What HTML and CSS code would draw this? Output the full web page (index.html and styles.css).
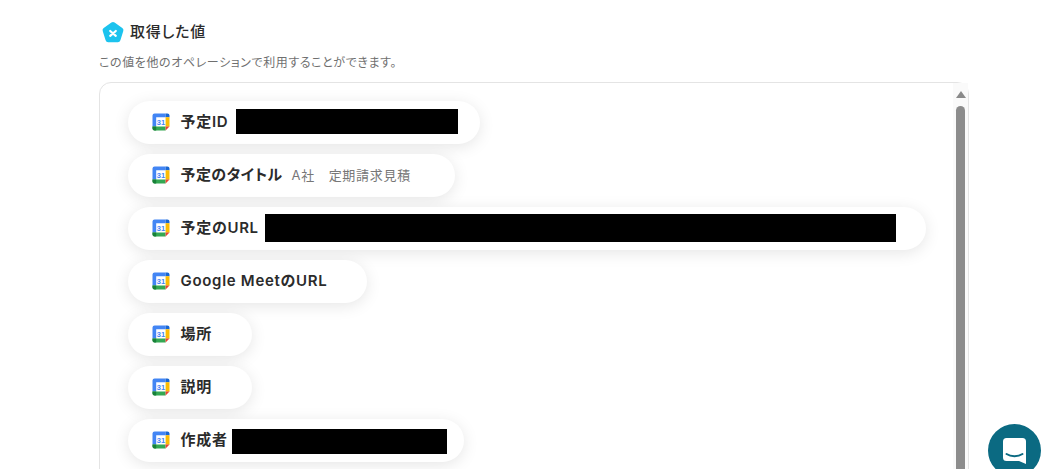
FILE: index.html
```html
<!DOCTYPE html>
<html lang="ja">
<head>
<meta charset="utf-8">
<title>取得した値</title>
<link rel="stylesheet" href="styles.css">
</head>
<body>
<svg class="defs" width="0" height="0" aria-hidden="true">
  <defs>
    <symbol id="gcal" viewBox="0 0 18 18">
      <rect x="1" y="1" width="16" height="16" rx="1.6" fill="#fff"/>
      <path d="M2.6 0.5H13.6V4.2H4.2V13.6H0.5V2.6A2.1 2.1 0 0 1 2.6 0.5Z" fill="#4285f4"/>
      <path d="M13.6 0.5H15.4A2.1 2.1 0 0 1 17.5 2.6V4.2H13.6Z" fill="#1967d2"/>
      <rect x="13.6" y="4.2" width="3.9" height="9.4" fill="#fbbc04"/>
      <path d="M4.2 13.6H13.6V17.5H2.6A2.1 2.1 0 0 1 0.5 15.4V13.6H4.2Z" fill="#34a853"/>
      <path d="M0.5 13.6H4.2V17.5H2.6A2.1 2.1 0 0 1 0.5 15.4Z" fill="#188038"/>
      <path d="M13.6 13.6H17.5L13.6 17.5Z" fill="#ea4335"/>
      <text x="8.9" y="11.9" class="gcal-num">31</text>
    </symbol>
  </defs>
</svg>
<main class="page">
  <header class="head">
    <svg class="logo" width="24" height="24" viewBox="0 0 24 24" aria-hidden="true">
      <path d="M10.4 1.6a2.7 2.7 0 0 1 3.2 0l7.7 5.5a2.7 2.7 0 0 1 1 3l-2.9 9.2a2.7 2.7 0 0 1-2.6 1.9H7.2a2.7 2.7 0 0 1-2.6-1.9L1.7 10.1a2.7 2.7 0 0 1 1-3Z" fill="#1cc3ee"/>
      <path d="M9.2 10 14.8 14.8M14.8 10 9.2 14.8" stroke="#fff" stroke-width="2.2" stroke-linecap="round"/>
    </svg>
    <h1 class="title">取得した値</h1>
  </header>
  <p class="note">この値を他のオペレーションで利用することができます。</p>
  <section class="panel">
    <ul class="list">
      <li class="pill"><svg class="cal"><use href="#gcal"/></svg><span class="label">予定ID</span><span class="mask mask-id"></span></li>
      <li class="pill"><svg class="cal"><use href="#gcal"/></svg><span class="label label-kana">予定のタイトル</span><span class="value">A社　定期請求見積</span></li>
      <li class="pill"><svg class="cal"><use href="#gcal"/></svg><span class="label">予定のURL</span><span class="mask mask-url"></span></li>
      <li class="pill"><svg class="cal"><use href="#gcal"/></svg><span class="label">Google MeetのURL</span></li>
      <li class="pill"><svg class="cal"><use href="#gcal"/></svg><span class="label">場所</span></li>
      <li class="pill"><svg class="cal"><use href="#gcal"/></svg><span class="label">説明</span></li>
      <li class="pill"><svg class="cal"><use href="#gcal"/></svg><span class="label">作成者</span><span class="mask mask-author"></span></li>
    </ul>
    <div class="scrollbar" aria-hidden="true">
      <span class="arrow"></span>
      <span class="thumb"></span>
    </div>
  </section>
</main>
<button class="chat" type="button" aria-label="チャット">
  <svg width="23" height="26" viewBox="0 0 23 26" aria-hidden="true">
    <path d="M3.5 0H19.5A3.5 3.5 0 0 1 23 3.5V26L16 23H3.5A3.5 3.5 0 0 1 0 19.5V3.5A3.5 3.5 0 0 1 3.5 0Z" fill="#fff"/>
    <path d="M3.5 16C8 19 15 19 19.5 16" fill="none" stroke="#0b6a82" stroke-width="2" stroke-linecap="round"/>
  </svg>
</button>
</body>
</html>
```

FILE: styles.css
```css
* { box-sizing: border-box; }

html, body {
  margin: 0;
  height: 100%;
  overflow: hidden;
  background: #fff;
}

body {
  font-family: Inter, "Noto Sans CJK JP", "Noto Sans", sans-serif;
  font-feature-settings: "palt";
  color: #2b2b2b;
}

.defs { position: absolute; }

.page {
  width: 870px;
  margin-left: 99px;
  padding-top: 19px;
}

.head {
  display: flex;
  align-items: center;
  gap: 5px;
  height: 26px;
  margin-left: 2px;
}

.logo { display: block; flex: none; margin-top: 2px; }

.title {
  margin: 0;
  font-size: 15px;
  font-weight: 500;
  line-height: 26px;
  letter-spacing: 0.8px;
  color: #2b2b2b;
}

.note {
  margin: 9px 0 0;
  font-size: 12px;
  line-height: 17px;
  letter-spacing: 0.6px;
  color: #6f6f6f;
}

.panel {
  position: relative;
  height: 500px;
  margin-top: 11px;
  border: 1px solid #e4e4e4;
  border-radius: 12px;
  padding: 18px 0 0 28px;
}

.list {
  list-style: none;
  margin: 0;
  padding: 0;
  display: flex;
  flex-direction: column;
  align-items: flex-start;
  gap: 10px;
}

.pill {
  display: flex;
  align-items: center;
  height: 43px;
  padding: 0 0 1px 24px;
  background: #fff;
  border-radius: 22px;
  box-shadow: 0 3px 16px rgba(0, 0, 0, 0.1);
}

.cal {
  flex: none;
  width: 18px;
  height: 18px;
  margin-right: 10.5px;
}

.gcal-num {
  font-family: "Liberation Sans", sans-serif;
  font-size: 7.5px;
  font-weight: 700;
  text-anchor: middle;
  fill: #4285f4;
}

.label {
  font-size: 15px;
  font-weight: 600;
  letter-spacing: 0.7px;
  line-height: 20px;
  color: #2b2b2b;
  white-space: nowrap;
}

.label-kana { letter-spacing: 0.42px; }

.label:last-child { margin-right: 40px; }

.value {
  margin: 0 44.5px 1px 9px;
  font-size: 13px;
  letter-spacing: 0.7px;
  color: #777;
  white-space: nowrap;
}

.mask {
  display: block;
  height: 25px;
  margin-bottom: 1px;
  background: #000;
}

.mask-id { width: 222px; margin-left: 8px; margin-right: 22px; }
.mask-url { width: 631px; height: 28px; margin-left: 6px; margin-right: 30px; }
.mask-author { width: 215px; margin: 3px 17px 0 4.5px; }

.scrollbar {
  position: absolute;
  top: 0;
  right: 0;
  bottom: 0;
  width: 15px;
  background: #fafafa;
  display: flex;
  flex-direction: column;
  align-items: center;
}

.arrow {
  margin-top: 8px;
  width: 0;
  height: 0;
  border-left: 5px solid transparent;
  border-right: 5px solid transparent;
  border-bottom: 7px solid #8a8a8a;
}

.thumb {
  width: 9px;
  height: 420px;
  margin-top: 8px;
  border-radius: 5px;
  background: #8c8c8c;
}

.chat {
  position: fixed;
  left: 988px;
  top: 424px;
  width: 53px;
  height: 53px;
  padding: 0;
  border: 0;
  border-radius: 50%;
  background: #0b6a82;
  display: flex;
  align-items: center;
  justify-content: center;
}
```
